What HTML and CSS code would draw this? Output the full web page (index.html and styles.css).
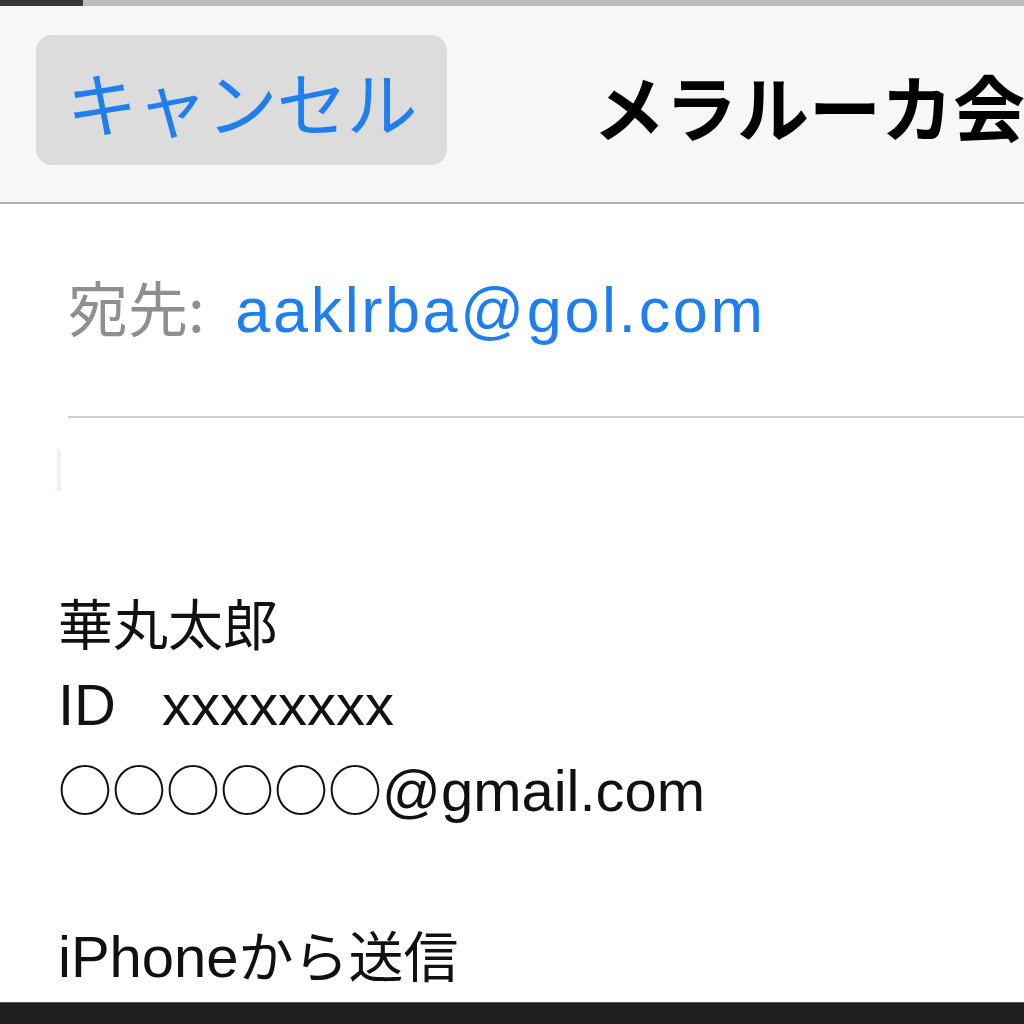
FILE: index.html
```html
<!DOCTYPE html>
<html lang="ja">
<head>
<meta charset="utf-8">
<title>メール作成</title>
<link rel="stylesheet" href="styles.css">
</head>
<body>
<div class="screen">
  <div class="statusbar">
    <div class="status-dark"></div>
    <div class="status-light"></div>
  </div>
  <header class="navbar">
    <div class="cancel-btn">キャンセル</div>
    <div class="nav-title">メラルーカ会員登録</div>
  </header>
  <main class="compose">
    <div class="recipient">
      <span class="rcpt-label">宛先:</span>
      <span class="rcpt-addr">aaklrba@gol.com</span>
    </div>
    <div class="caret"></div>
    <div class="message">
      <div class="line"><span class="ja">華丸太郎</span></div>
      <div class="line">ID<span class="gap"></span>xxxxxxxx</div>
      <div class="line"><span class="circles">○○○○○○</span>@gmail.com</div>
      <div class="line empty"></div>
      <div class="line">iPhone<span class="ja">から送信</span></div>
    </div>
  </main>
  <div class="bottombar"></div>
</div>
</body>
</html>
```
FILE: styles.css
```css
html, body {
  margin: 0;
  padding: 0;
  background: #ffffff;
}

.screen {
  width: 1024px;
  height: 1024px;
  overflow: hidden;
  display: flex;
  flex-direction: column;
  font-family: "Liberation Sans", "Noto Sans CJK JP", sans-serif;
  background: #ffffff;
}

.statusbar {
  height: 6px;
  flex: none;
  display: flex;
}

.status-dark {
  width: 83px;
  background: #38383a;
}

.status-light {
  flex: 1;
  background: #bdbdbd;
}

.navbar {
  height: 198px;
  flex: none;
  box-sizing: border-box;
  background: #f7f7f7;
  border-bottom: 2px solid #b4b4b4;
  display: flex;
  align-items: flex-start;
  padding: 29px 0 0 36px;
  white-space: nowrap;
}

.cancel-btn {
  width: 411px;
  height: 130px;
  box-sizing: border-box;
  border-radius: 16px;
  background: #dcdcdc;
  color: #1f7ff0;
  font-family: "Noto Sans CJK JP", sans-serif;
  font-size: 71px;
  line-height: 130px;
  text-align: center;
  letter-spacing: -1px;
  flex: none;
}

.nav-title {
  margin-left: 146px;
  font-family: "Noto Sans CJK JP", sans-serif;
  font-weight: 700;
  font-size: 72px;
  line-height: 140px;
  color: #000000;
  flex: none;
}

.compose {
  flex: 1;
  display: flex;
  flex-direction: column;
}

.recipient {
  margin-left: 68px;
  padding: 47px 0 55px 0;
  height: 110px;
  line-height: 110px;
  border-bottom: 2px solid #cdcdcd;
  font-size: 60px;
  white-space: nowrap;
}

.rcpt-label {
  color: #8e8e93;
  font-family: "Noto Sans CJK JP", sans-serif;
}

.rcpt-addr {
  color: #1f7ff0;
  margin-left: 14px;
  font-size: 63px;
  letter-spacing: 2.6px;
}

.caret {
  width: 4px;
  height: 42px;
  margin: 31px 0 0 57px;
  background: #edf1fb;
}

.message {
  margin: 89px 0 0 58px;
  font-size: 58px;
  color: #111111;
}

.line {
  height: 83px;
  line-height: 83px;
  white-space: nowrap;
}

.ja {
  font-family: "Noto Sans CJK JP", sans-serif;
  font-size: 55px;
}

.gap {
  display: inline-block;
  width: 46px;
}

.circles {
  font-family: "Noto Sans CJK JP", sans-serif;
  font-size: 54px;
}

.bottombar {
  height: 21px;
  flex: none;
  margin-top: auto;
  background: #1f1f1f;
  border-top: 1px solid #5a5a5a;
}
```
